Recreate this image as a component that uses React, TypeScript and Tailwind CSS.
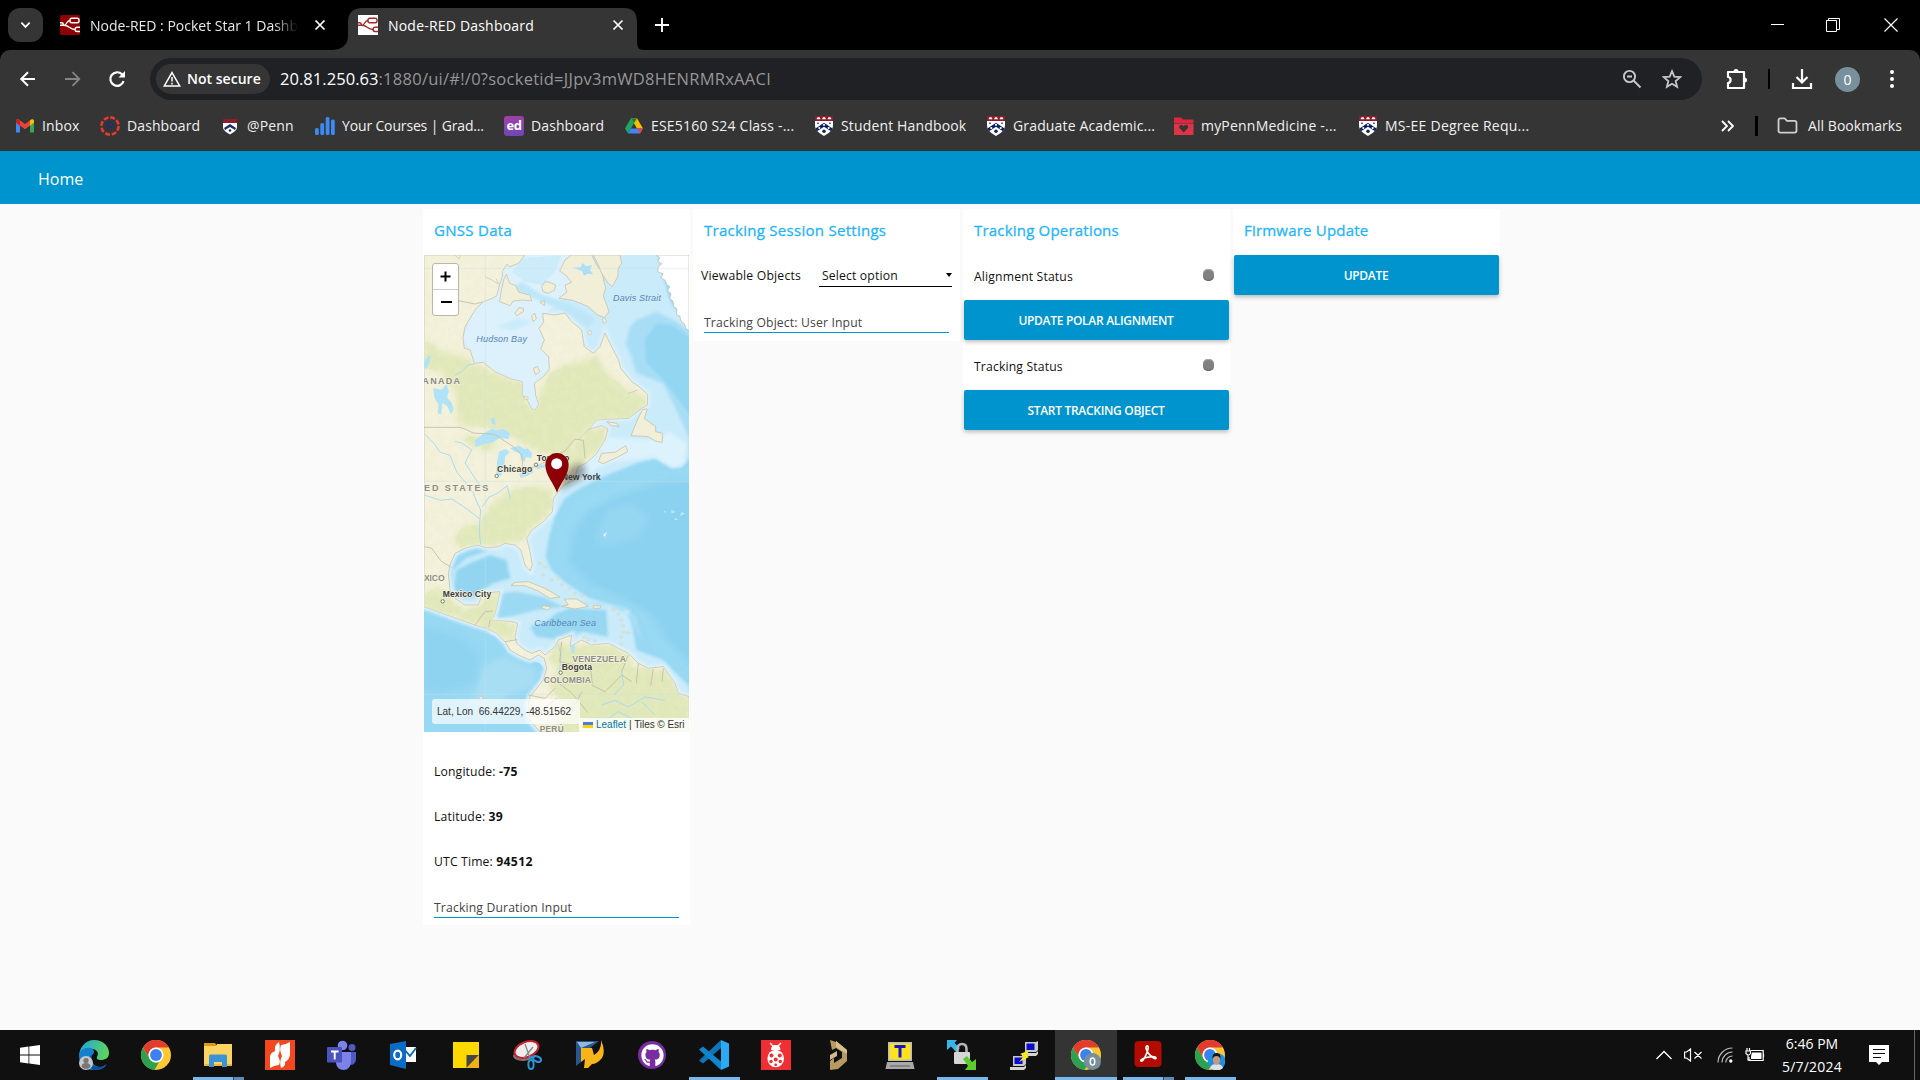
import React from "react";
import { FaGithub } from "react-icons/fa";

type P = { className?: string };

const NodeRed = ({ dark }: { dark: boolean }) => {
  const c = dark ? "#ffffff" : "#a02c2c";
  return (
    <svg viewBox="0 0 20 20" className="h-5 w-5 shrink-0">
      <rect width="20" height="20" rx={dark ? 1.5 : 0} fill={dark ? "#8f0000" : "#ffffff"} />
      <g fill="none" stroke={c} strokeWidth="1.4">
        <rect x="10" y="3.300" width="9" height="4.400" rx="1.800" />
        <path d="M20 12.300h-3q-1.800 0-1.800 1.800v.6q0 1.800 1.800 1.800h3" />
        <path d="M0 10.200h4c3 0 2.500-4.700 6-4.700M4 10.200c5 0 5.500 4.300 11 4.300M0 7.700h1.500q1.800 0 1.800 1.500v1.500" />
      </g>
    </svg>
  );
};

const Cross = ({ className }: P) => (
  <svg viewBox="0 0 12 12" className={className} stroke="#fff" strokeWidth="1.700" fill="none">
    <path d="M1.500 1.500l9 9M10.500 1.500l-9 9" />
  </svg>
);

const Shield = () => (
  <svg viewBox="0 0 20 20" className="h-5 w-5">
    <path d="M1 0h18v9c0 6-5 8.500-9 11C6 17.500 1 15 1 9z" fill="#fff" />
    <path d="M1 0h18v5H1z" fill="#8c1d2b" />
    <path d="M3.500 1.200h2l1 2h-4zM9 1.200h2l1 2H8zM14.500 1.200h2l1 2h-4z" fill="#fff" />
    <path d="M1.500 12.500L10 6.800l8.500 5.700-1.500 2.800-7-4.500-7 4.500z" fill="#0c2060" />
    <g fill="#fff">
      <circle cx="10" cy="8.800" r="1.100" />
      <circle cx="5.300" cy="12" r="1.100" />
      <circle cx="14.700" cy="12" r="1.100" />
    </g>
    <circle cx="10" cy="15.300" r="1.700" fill="#0c2060" />
    <path d="M3 7.200h2M15 7.200h2" stroke="#0c2060" />
  </svg>
);

const Gmail = () => (
  <svg viewBox="0 0 20 20" className="h-5 w-5">
    <path d="M1 5v11.500h4V9z" fill="#4285f4" />
    <path d="M15 9v7.500h4V5z" fill="#34a853" />
    <path d="M1 4.800C1 3 3 2.800 4.200 3.700L10 8l5.800-4.300V9L10 13.200 4.200 9 1 6.800z" fill="#ea4335" />
    <path d="M15 4.300C17 2.700 19 3.300 19 5v1.800L15 9.700z" fill="#fbbc04" />
    <path d="M1 6.800V5c0-1.500 1.800-2.200 4-.7v5.400z" fill="#c5221f" />
  </svg>
);

const Canvas = () => (
  <svg viewBox="0 0 20 20" className="h-5 w-5">
    <circle cx="10" cy="10" r="8.600" fill="none" stroke="#e63b2e" strokeWidth="2.600" strokeDasharray="4.900 1.850" />
    <path d="M8 14V6.500h3a2.200 2.200 0 010 4.500H8" fill="none" stroke="#26305f" strokeWidth="1.800" />
  </svg>
);

const PennSmall = () => (
  <svg viewBox="0 0 20 20" className="h-5 w-5">
    <path d="M3 3h14v4H3z" fill="#8c1d2b" />
    <path d="M3 7h14v4c0 4-4 5.500-7 7.500C7 16.500 3 15 3 11z" fill="#fff" />
    <path d="M4 12l6-4 6 4-1 2-5-3-5 3z" fill="#1b2b6b" />
    <circle cx="10" cy="14.500" r="1.300" fill="#1b2b6b" />
  </svg>
);

const Bars = () => (
  <svg viewBox="0 0 20 20" className="h-5 w-5" fill="#3d8bf2">
    <rect x="0" y="12" width="3.800" height="7" rx="1.500" />
    <rect x="5.300" y="7" width="3.800" height="12" rx="1.500" />
    <rect x="10.700" y="1" width="3.800" height="18" rx="1.500" />
    <rect x="16" y="3.500" width="3.800" height="15.500" rx="1.500" />
  </svg>
);

const Ed = () => (
  <div className="flex h-5 w-5 items-center justify-center rounded-[3px] bg-linear-to-b from-[#a03fa8] to-[#6f45b5] text-[13px] leading-none font-bold tracking-[-0.5px] text-white">
    ed
  </div>
);

const Drive = () => (
  <svg viewBox="0 0 20 20" className="h-5 w-5">
    <path d="M7 2.200L1 12.500 4 17.600 10 7.300z" fill="#1fa463" />
    <path d="M7 2.200h6l6 10.300h-6z" fill="#fbbc04" />
    <path d="M4 17.600l3-5.100h12l-3 5.100z" fill="#4285f4" />
    <path d="M13 12.500h6l-3 5.100z" fill="#ea4335" />
    <path d="M7 2.200h6l-3 5.100z" fill="#188038" />
  </svg>
);

const RedFolder = () => (
  <svg viewBox="0 0 20 20" className="h-5 w-5">
    <path d="M0 1.500h7l2 2h10.500V7H0z" fill="#e0263f" />
    <path d="M0 7.500h19.500V19H0z" fill="#dc3547" />
    <path d="M9.700 16.500L5.500 12c-1.500-3 2.700-4.200 4.200-1.600 1.500-2.600 5.700-1.400 4.200 1.600z" fill="#353535" />
  </svg>
);

const bookmarks: { icon: React.ReactNode; label: string; w: string; t: string }[] = [
  { icon: <Gmail />, label: "Inbox", w: "w-[85px]", t: "tracking-[0.150px]" },
  { icon: <Canvas />, label: "Dashboard", w: "w-[120px]", t: "tracking-[0.100px]" },
  { icon: <PennSmall />, label: "@Penn", w: "w-[95px]", t: "tracking-[0.150px]" },
  { icon: <Bars />, label: "Your Courses | Grad...", w: "w-[189px]", t: "tracking-[-0.150px]" },
  { icon: <Ed />, label: "Dashboard", w: "w-[120px]", t: "tracking-[0.100px]" },
  { icon: <Drive />, label: "ESE5160 S24 Class -...", w: "w-[190px]", t: "tracking-[0.200px]" },
  { icon: <Shield />, label: "Student Handbook", w: "w-[172px]", t: "tracking-[0.150px]" },
  { icon: <Shield />, label: "Graduate Academic...", w: "w-[188px]", t: "tracking-[0.150px]" },
  { icon: <RedFolder />, label: "myPennMedicine -...", w: "w-[184px]", t: "tracking-[0.200px]" },
  { icon: <Shield />, label: "MS-EE Degree Requ...", w: "w-[180px]", t: "tracking-[0.250px]" },
];

const TabStrip = () => (
  <div className="flex h-[50px] items-start bg-black text-[14px] text-[#e8e8e8]">
    <div className="mt-2 ml-2 flex h-[34px] w-[35px] items-center justify-center rounded-[12px] bg-[#353535]">
      <svg viewBox="0 0 12 8" className="h-[8px] w-[11px]" fill="none" stroke="#fff" strokeWidth="2">
        <path d="M1.500 1.500L6 6l4.500-4.500" />
      </svg>
    </div>
    <div className="ml-[17px] flex h-[50px] w-[272px] items-center">
      <NodeRed dark />
      <div className="ml-[10px] w-[208px] overflow-hidden whitespace-nowrap [mask-image:linear-gradient(to_right,black_88%,transparent)]">
        Node-RED : Pocket Star 1 Dashb
      </div>
      <Cross className="ml-4 h-3 w-3" />
    </div>
    <svg viewBox="0 0 312 42" className="mt-2 -mr-[312px] h-[42px] w-[312px]">
      <path d="M0 42c8 0 16-4 16-14V14C16 5 21 0 30 0h262c9 0 13 5 13 14v14c0 10 0 14 7 14z" fill="#353535" />
    </svg>
    <div className="relative flex h-[50px] w-[312px] items-center pl-[26px] text-white">
      <NodeRed dark={false} />
      <span className="ml-[10px] w-[224px] whitespace-nowrap tracking-[0.200px]">Node-RED Dashboard</span>
      <Cross className="h-3 w-3 shrink-0" />
    </div>
    <svg viewBox="0 0 14 14" className="mt-[18px] ml-[11px] h-[14px] w-[14px]" stroke="#fff" strokeWidth="1.900">
      <path d="M7 0v14M0 7h14" />
    </svg>
    <div className="mt-[18px] ml-auto flex items-center pr-[22px]">
      <svg viewBox="0 0 14 14" className="h-[14px] w-[14px]" stroke="#fff">
        <path d="M1 6.500h13" />
      </svg>
      <svg viewBox="0 0 14 14" className="ml-[42px] h-[14px] w-[14px]" stroke="#fff" fill="none">
        <path d="M.5 2.500h10v11H.5zM2.500 2.500V.5h11v11h-3" />
      </svg>
      <svg viewBox="0 0 14 14" className="ml-[44px] h-[14px] w-[14px]" stroke="#fff" strokeWidth="1.200">
        <path d="M.5.5l13 13M13.500.5l-13 13" />
      </svg>
    </div>
  </div>
);

const Toolbar = () => (
  <div className="flex h-[58px] items-center rounded-t-[10px] bg-[#353535] pl-[19px]">
    <svg viewBox="0 0 18 18" className="h-[18px] w-[18px]" fill="none" stroke="#fff" strokeWidth="2">
      <path d="M16 9H2.500M9 2.200L2.200 9 9 15.800" />
    </svg>
    <svg viewBox="0 0 18 18" className="ml-[27px] h-[18px] w-[18px]" fill="none" stroke="#858585" strokeWidth="1.800">
      <path d="M1 9h14M8.500 2.200L15.300 9l-6.800 6.800" />
    </svg>
    <svg viewBox="0 0 18 18" className="ml-[26px] h-[18px] w-[18px]" fill="none" stroke="#fff" strokeWidth="2.200">
      <path d="M15.600 11.200A6.800 6.800 0 1114 4.300l1.500 1.500" />
      <path d="M17 1v6.500h-6.500z" fill="#fff" stroke="none" />
    </svg>
    <div className="ml-6 flex h-[42px] w-[1552px] items-center rounded-full bg-[#202124] pl-[6px]">
      <div className="flex h-[30px] w-[114px] items-center rounded-full bg-[#353535] pl-[7px]">
        <svg viewBox="0 0 18 16" className="h-[16px] w-[18px]" fill="none" stroke="#fff" strokeWidth="1.500">
          <path d="M9 1.600L16.700 15H1.300z" />
          <path d="M9 6v4.500M9 11.800v1.700" />
        </svg>
        <span className="mb-px ml-[6px] whitespace-nowrap text-[14px] font-semibold tracking-[0.020px] text-white">Not secure</span>
      </div>
      <div className="ml-[10px] whitespace-nowrap text-[16.500px] tracking-[0.260px] text-[#969696]">
        <span className="tracking-[0.050px] text-white">20.81.250.63</span>:1880/ui/#!/0?socketid=JJpv3mWD8HENRMRxAACI
      </div>
      <svg viewBox="0 0 20 20" className="ml-auto h-5 w-5" fill="none" stroke="#c7c7c7" strokeWidth="1.900">
        <circle cx="7.500" cy="7.500" r="5.600" />
        <path d="M11.500 11.500L18.500 18.500M5 7.500h5" />
      </svg>
      <svg viewBox="0 0 20 20" className="mr-5 ml-5 h-5 w-5" fill="none" stroke="#c7c7c7" strokeWidth="1.800">
        <path d="M10 2.200l2.300 5.400 6 .5-4.600 3.900 1.400 5.800-5.100-3.100-5.100 3.100L6.300 12 1.700 8.100l6-.5z" />
      </svg>
    </div>
    <svg viewBox="0 0 22 22" className="ml-6 h-[22px] w-[22px]" fill="none" stroke="#fff" strokeWidth="2.200" strokeLinejoin="round">
      <path d="M2 4h16v16H2v-5c3.500-.5 3.500-5.500 0-6z" />
      <path d="M7.500 3.500a2.500 2.500 0 015 0zM18.500 9.500a2.500 2.500 0 010 5z" fill="#fff" stroke="none" />
    </svg>
    <div className="ml-[20px] h-5 w-[2px] bg-black" />
    <svg viewBox="0 0 22 22" className="ml-[21px] h-[22px] w-[22px]" fill="none" stroke="#fff" strokeWidth="2.200">
      <path d="M11 1v13M5.500 9l5.500 5.500L16.500 9M2 15v5h18v-5" />
    </svg>
    <div className="ml-[22px] flex h-[25px] w-[25px] items-center justify-center rounded-full bg-[#78909c] text-[14px] text-white">0</div>
    <svg viewBox="0 0 4 20" className="ml-[30px] h-5 w-1" fill="#fff">
      <circle cx="2" cy="3" r="2" />
      <circle cx="2" cy="10" r="2" />
      <circle cx="2" cy="17" r="2" />
    </svg>
  </div>
);

const Bookmarks = () => (
  <div className="flex h-[43px] items-start bg-[#353535] pl-[15px] text-[14px] text-[#f0f0f0]">
    {bookmarks.map((b, i) => (
      <div key={i} className={`flex h-[35px] shrink-0 items-center ${b.w}`}>
        {b.icon}
        <span className={`mb-px ml-[7px] whitespace-nowrap ${b.t}`}>{b.label}</span>
      </div>
    ))}
    <div className="ml-auto flex h-[35px] items-center pr-[18px]">
      <svg viewBox="0 0 13 12" className="h-3 w-[13px]" fill="none" stroke="#fff" strokeWidth="1.800">
        <path d="M1 1l5 5-5 5M7 1l5 5-5 5" />
      </svg>
      <div className="ml-[21px] h-5 w-[3px] bg-black" />
      <svg viewBox="0 0 22 18" className="ml-[19px] h-[17px] w-[21px]" fill="none" stroke="#d0d0d0" strokeWidth="1.900">
        <path d="M1.500 3.500q0-2 2-2H8l2.500 2.500h8q2 0 2 2v8.500q0 2-2 2h-15q-2 0-2-2z" />
      </svg>
      <span className="mb-px ml-[10px] whitespace-nowrap tracking-[0.050px]">All Bookmarks</span>
    </div>
  </div>
);

const LAND =
  "M27 150H330L310 175 285 185 275 178 262 200 262 215 255 235 245 272 232 280 205 290 182 312 165 340 150 365 144 400 148 430 165 434 178 475 205 472 240 500 285 521 322 530 322 570 340 590 347 608 360 616 371 598 362 570 358 535 385 515 403 492 401 455 377 432 388 405 372 370 386 352 383 325 420 330 450 324 470 350 500 375 508 425 535 445 555 425 570 384 590 425 612 468 617 490 650 530 672 545 698 568 697 600 680 610 640 640 590 642 545 645 510 685 487 705 525 672 560 662 579 672 570 705 560 720 545 745 530 760 512 775 490 785 482 808 492 818 450 838 428 862 415 882 412 920 385 950 350 975 335 1000 345 1040 352 1080 345 1098 330 1080 318 1035 300 1020 270 1015 250 1025 215 1028 185 1020 150 1030 120 1045 105 1080 100 1105 105 1155 120 1180 150 1200 190 1200 202 1165 255 1160 245 1205 237 1235 225 1245 290 1250 308 1255 300 1295 305 1315 330 1335 350 1345 375 1335 390 1350 420 1325 430 1305 470 1290 465 1325 500 1305 530 1320 580 1315 610 1330 640 1345 670 1375 700 1390 745 1385 780 1435 790 1465 822 1475V1581H375L345 1545 340 1500 345 1475 365 1450 385 1425 395 1390 388 1360 370 1350 345 1365 310 1350 285 1335 270 1310 245 1285 215 1270 180 1260 110 1235 27 1205Z";

const ISLANDS = [
  "M266 225L274 208 284 235 302 242 312 262 345 270 350 288 325 285 295 288 285 302 254 290 258 262Z",
  "M380 245L390 230 405 232 422 240 418 256 400 265 384 260Z",
  "M434 198L450 165 470 150 530 150 545 180 560 200 572 250 565 272 582 320 568 338 545 328 520 305 500 296 470 285 432 280 455 262 450 240 470 232 452 210Z",
  "M535 150L615 150 620 175 610 190 608 215 592 245 580 235 560 205 550 180Z",
  "M300 325L312 308 325 310 325 320 305 332Z",
  "M350 332L360 325 364 342 354 350Z",
  "M375 292L388 287 388 302Z",
  "M355 490L368 484 374 500 362 510Z",
  "M648 692L665 650 682 614 697 612 688 640 708 655 722 665 722 680 742 685 742 712 720 708 700 695Z",
  "M550 770L560 745 600 742 632 722 638 740 610 755 565 776Z",
  "M288 1142L300 1132 340 1130 390 1150 435 1176 405 1180 370 1158 330 1142Z",
  "M448 1182L485 1182 520 1204 480 1212 440 1204 460 1200Z",
  "M385 1202L408 1206 398 1214 380 1210Z",
  "M535 1202L558 1203 555 1210 535 1210Z",
  "M575 650L605 655 612 664 590 662Z",
];

const GREEN = [
  "M27 400L80 440 150 455 180 478 230 500 285 522 320 532 330 590 365 612 375 560 400 510 450 480 500 470 540 450 580 510 640 560 690 570 690 605 640 640 560 645 510 680 480 705 460 760 380 745 300 700 240 670 130 660 120 560 80 500 27 490Z",
  "M150 960L190 960 230 900 260 870 330 845 410 850 415 900 400 930 340 975 330 1005 300 1010 240 1020 190 1015 130 1030 120 1000Z",
  "M400 1440L440 1380 520 1370 620 1390 690 1390 760 1400 800 1475 822 1480V1581H420L450 1500Z",
  "M27 1170L60 1150 95 1160 110 1190 150 1215 195 1205 215 1170 255 1165 245 1240 300 1260 290 1310 180 1255 90 1225 27 1205Z",
  "M400 1360L430 1310 460 1320 600 1325 650 1360 640 1400 500 1390 440 1400Z",
  "M490 700L530 672 572 670 570 710 520 760 490 780 440 830 420 840 430 790 470 740Z",
  "M140 690L200 700 250 720 230 740 160 720Z",
];

const MapLabel = ({ x, y, w, size, fill, bold, italic, halo, children }: { x: number; y: number; w: number; size: number; fill: string; bold?: boolean; italic?: boolean; halo?: boolean; children: string }) => (
  <text
    x={x}
    y={y}
    textLength={w}
    fontSize={size}
    fill={fill}
    fontFamily="Liberation Sans, sans-serif"
    fontWeight={bold ? 700 : 400}
    fontStyle={italic ? "italic" : "normal"}
    stroke={halo ? "#f4f2de" : "none"}
    strokeWidth={halo ? 4 : 0}
    paintOrder="stroke"
  >
    {children}
  </text>
);

const WorldMap = () => (
  <svg viewBox="27 150 795 1431" className="block h-[477px] w-[265px]">
    <defs>
      <filter id="soft" x="-20%" y="-20%" width="140%" height="140%">
        <feGaussianBlur stdDeviation="10" />
      </filter>
      <filter id="edge" x="-20%" y="-20%" width="140%" height="140%">
        <feGaussianBlur stdDeviation="4" />
      </filter>
      <filter id="grain" x="0" y="0" width="100%" height="100%">
        <feTurbulence type="fractalNoise" baseFrequency="0.045" numOctaves="4" seed="7" result="n" />
        <feColorMatrix in="n" type="matrix" values="0 0 0 0 0.74 0 0 0 0 0.8 0 0 0 0 0.5 0 0 0 6 -2.6" result="g" />
        <feComposite in="g" in2="SourceAlpha" operator="in" />
      </filter>
      <clipPath id="land">
        <path d={LAND} />
      </clipPath>
    </defs>
    <rect x="27" y="150" width="795" height="1431" fill="#97d8f3" />
    <g transform="translate(24 135)">
      <path d="M200 0H700L740 150 800 240V620L775 655 740 650 700 625 640 640 540 680 470 715 425 745 395 800 378 860 368 920 385 960 430 1000 500 1045 620 1080 640 1200 720 1230 800 1310V1400H200Z" fill="#caebfa" filter="url(#edge)" />
      <path d="M690 570L740 545 790 580 785 640 750 655 690 620 560 640 470 680 450 660 540 560Z" fill="#dcf2fc" filter="url(#edge)" />
      <path d="M620 230L640 210 700 185 760 215 810 250V590L760 480 720 400 640 370 625 320 608 280Z" fill="#a8def5" filter="url(#edge)" />
      <path d="M665 270L700 220 750 225 810 270V510L760 440 720 390 670 340Z" fill="#93d6f2" filter="url(#edge)" />
      <path d="M820 650L720 670 600 695 480 735 425 800 390 870 385 930 430 980 500 1020 570 1045 640 1080 680 1180 820 1290Z" fill="#98d9f3" filter="url(#edge)" />
      <path d="M820 690L700 700 580 740 490 790 450 850 440 940 500 1000 590 1040 680 1090 740 1180 820 1260Z" fill="#8bd2f0" filter="url(#soft)" />
      <path d="M520 850L550 780 620 760 680 800 650 860 570 885 520 880Z" fill="#9dd9f3" filter="url(#soft)" opacity=".6" />
      <path d="M90 960L130 925 200 900 270 905 300 960 320 980 230 1030 140 1075 85 1040Z" fill="#c9ebfa" filter="url(#edge)" />
      <path d="M100 960L140 940 200 915 250 930 262 985 210 1000 150 1040 108 1045 92 1010Z" fill="#93d5f1" filter="url(#edge)" />
      <path d="M235 1030L280 1025 360 1040 420 1070 340 1080 260 1100 215 1110Z" fill="#9cd9f3" filter="url(#edge)" />
      <path d="M400 1090L440 1075 550 1080 555 1160 480 1145 420 1170 340 1160 320 1130 370 1115Z" fill="#97d7f2" filter="url(#edge)" />
      <path d="M420 1055L540 1060 640 1100 660 1180 600 1070Z" fill="#a8def5" filter="url(#edge)" />
      <path d="M0 1080L150 1130 220 1160 290 1220 350 1240 370 1260 320 1350V1446H0Z" fill="#97d8f3" />
      <path d="M180 1250L240 1220 290 1240 340 1260 330 1310 250 1340 190 1400 140 1370Z" fill="#b4e2f6" filter="url(#soft)" opacity=".6" />
      <path d="M0 1130L110 1160 170 1220 160 1300 60 1330 0 1320Z" fill="#8bd2f0" filter="url(#soft)" opacity=".7" />
    </g>
    <path d={LAND} fill="none" stroke="#dcf1fc" strokeWidth="18" filter="url(#edge)" />
    <path d="M180 300L250 230 262 150H460L480 200 455 270 400 320 405 500 370 610 320 580 180 475 145 400Z" fill="#dcf1fc" />
    <path d="M325 160L440 150 420 200 380 240 330 230 290 200Z" fill="#cdecfa" />
    <path d="M290 250L380 290 450 320 520 370 540 340 450 290 380 270 320 230Z" fill="#bde6f8" filter="url(#edge)" />
    <path d="M245 365L310 340 350 350 300 375Z" fill="#c9ebfa" filter="url(#edge)" />
    <path d={LAND} fill="#f4f1dc" stroke="#c8c3ae" strokeWidth="2.500" strokeLinejoin="round" />
    <g clipPath="url(#land)">
      {GREEN.map((d, i) => (
        <path key={i} d={d} fill="#e2e9ba" filter="url(#soft)" />
      ))}
      {GREEN.map((d, i) => (
        <path key={i} d={d} fill="#fff" filter="url(#grain)" opacity=".6" />
      ))}
      <path d={LAND} fill="#fff" filter="url(#grain)" opacity=".1" />
    </g>
    {ISLANDS.map((d, i) => (
      <path key={i} d={d} fill="#f2efd9" stroke="#c8c3ae" strokeWidth="2.500" strokeLinejoin="round" />
    ))}
    <path
      d="M724 150L734 158 728 170 740 176 730 186 728 200 744 206 738 218 750 226 756 240 764 244 758 258 768 266 764 280 774 288 776 304 786 312 784 328 795 334 798 348 808 356 812 368 822 378V150Z"
      fill="#fff"
      stroke="#b9b6a8"
      strokeWidth="2"
    />
    <path d="M475 188l22-2 6-12 10 10 18-4-6 16 10 12-18-2-10 6-6-14z" fill="#a9dff7" />
    <g fill="#b0e3f8">
      <path d="M55 550l25 4 14-16 8 20-6 18 14 18 6 20-8 14-12-26-14-8-4 36-10-6 2-26-12-20zM27 470l14-20 6 8-12 34-8-4z" />
      <path d="M180 706l25-20 28-16 10 6 24-4 18 12-4 18-26-4-20 14-28 6-26 8z" />
      <path d="M246 770l6-30 20-8 12 8-14 16-2 30-10 26-14-2zM285 730l26-8 18 10 10-2 12 14-2 16-16-4-4 14-10-6-4-18-18-8zM312 808l30-12 16 4-20 12-20 6zM362 785l30-8 4 8-28 8zM228 640l10-2 4 22-12-4z" />
      <path d="M468 1325q8-10 12 0l-2 16q-6 8-10 0z" />
    </g>
    <g fill="none" stroke="#a8dcf4" strokeWidth="3">
      <path d="M27 685l30 30 18 26 30 10 20 50 32 38 18 26 10 24 12 26-2 24 -2 40 4 40" />
      <path d="M27 870l50 16 34-4 30 20 42 30 10 10" />
      <path d="M286 880l-10-38 -30 24-24 10-20 30" />
      <path d="M120 510l20-10 20-20 22-4M120 710l20 4 30 20-20 40 40 60 20 20M430 1320l8 30-4 50M560 1500l40-14 40 20 50-30 60 10M520 1540l60 0 30-20 60 30M620 1400l6 40-30 30M680 1490l40 40" />
    </g>
    <g fill="none" stroke="#c2bca6" strokeWidth="2.500">
      <path d="M27 667H136L150 672 175 684 238 688 295 725 320 750 324 790 365 785 420 752 450 738 480 702 505 706 510 760" />
      <path d="M27 1025l22 4 30 40 30 18M180 1260l30-40 24-2M225 1245l-4 22M270 1310l36-6M395 1425l34 8 40 30 50 60M440 1310l-6 60 60 14 34 14 4 40M620 1400l20-50M530 1440l40 20 50-50 30 20M670 1375l-6 60M715 1392l-8 50M745 1390l-4 40M340 1470l50 10 30-30M480 1500l20-40" />
      <path d="M345 1530l30-10 50-40M120 285l60 12 22-6" />
    </g>
    <g stroke="#c9dfe4" strokeWidth="2" opacity=".6">
      <path d="M211 150V1581M27 190H822M27 829H822M27 1468H822" />
    </g>
    <g fill="#e9ead0" stroke="#b9c3b0" strokeWidth="1">
      {[[375, 1075], [390, 1085], [385, 1110], [410, 1125], [430, 1120], [440, 1140], [465, 1150], [480, 1165], [500, 1172], [595, 1215], [610, 1228], [618, 1245], [624, 1262], [626, 1280], [618, 1296], [640, 1284], [620, 1318], [508, 1298], [520, 1304], [540, 1308]].map(([x, y]) => (
        <ellipse key={`${x}-${y}`} cx={x} cy={y} rx="5" ry="3" />
      ))}
    </g>
    <g fill="#f4f1dc" stroke="#c8c3ae" strokeWidth="2">
      <path d="M518 380l8-4 4 10-8 4zM562 342l8-3 4 12-8 4zM120 150h16l-4 12zM190 1480l10-8 4 12zM325 574l14 2 0 8-10-2zM210 215l25 12 15 10-6-16M640 565l28-10" />
    </g>
    <path d="M564 990l12-10-6 16z" fill="#e4f5fc" />
    <g fill="#b9e5f7">
      <path d="M745 920l6-4 2 8zM768 914l14 6-12 6zM800 920l10 6-16 8zM780 938l10 6-12 2z" />
    </g>

    <MapLabel x={594} y={287} w={144} size={27} fill="#5b83b3" italic>Davis Strait</MapLabel>
    <MapLabel x={184} y={410} w={152} size={27} fill="#5b83b3" italic>Hudson Bay</MapLabel>
    <MapLabel x={22} y={536} w={113} size={27} fill="#8b8a85" bold halo>ANADA</MapLabel>
    <MapLabel x={365} y={768} w={98} size={25} fill="#3c3c3c" bold halo>Toronto</MapLabel>
    <MapLabel x={246} y={801} w={106} size={26} fill="#3c3c3c" bold halo>Chicago</MapLabel>
    <MapLabel x={27} y={859} w={193} size={27} fill="#8f8e88" bold halo>ED  STATES</MapLabel>
    <MapLabel x={27} y={1128} w={62} size={26} fill="#8f8e88" bold halo>XICO</MapLabel>
    <MapLabel x={83} y={1177} w={146} size={26} fill="#3c3c3c" bold halo>Mexico City</MapLabel>
    <MapLabel x={358} y={1264} w={185} size={27} fill="#5b83b3" italic>Caribbean Sea</MapLabel>
    <MapLabel x={472} y={1371} w={161} size={26} fill="#8f8e88" bold halo>VENEZUELA</MapLabel>
    <MapLabel x={440} y={1394} w={91} size={26} fill="#3c3c3c" bold halo>Bogota</MapLabel>
    <MapLabel x={386} y={1433} w={142} size={26} fill="#8f8e88" bold halo>COLOMBIA</MapLabel>
    <MapLabel x={374} y={1580} w={72} size={25} fill="#8f8e88" bold halo>PERÚ</MapLabel>
    <path d="M430 858l22-50q24-40 52-30 18 20-10 46z" fill="#000" opacity=".36" filter="url(#soft)" />
    <MapLabel x={440} y={824} w={117} size={26} fill="#3c3c3c" bold>New York</MapLabel>
    <g fill="#fff" stroke="#444" strokeWidth="2">
      <circle cx="363" cy="779" r="5" />
      <circle cx="245" cy="813" r="5" />
      <circle cx="83" cy="1189" r="5" />
      <circle cx="437" cy="1403" r="5" />
    </g>
    <path d="M426 863C418 836 391 812 391 779a35 35 0 0170 0c0 33-27 57-35 84z" fill="#8d0006" />
    <circle cx="425" cy="776" r="16.500" fill="#fff" />
  </svg>
);

const MapWidget = () => (
  <div className="relative mx-px h-[477px] w-[265px] overflow-hidden font-['Liberation_Sans',sans-serif] text-[10px] text-[#333]">
    <WorldMap />
    <div className="absolute top-[8px] left-[8px] w-[27px] overflow-hidden rounded-[3px] border border-[#b9b7aa] bg-white">
      <div className="flex h-[26px] items-center justify-center border-b border-[#ccc]">
        <svg viewBox="0 0 11 11" className="h-[11px] w-[11px]" stroke="#000" strokeWidth="2">
          <path d="M5.500 .5v10M.5 5.500h10" />
        </svg>
      </div>
      <div className="flex h-[25px] items-center justify-center">
        <svg viewBox="0 0 11 11" className="ml-px h-[11px] w-[11px]" stroke="#000" strokeWidth="2">
          <path d="M0 5h11" />
        </svg>
      </div>
    </div>
    <div className="absolute bottom-[8px] left-[8px] flex h-[25px] w-[148px] items-center rounded-[3px] bg-white/70 pl-[5px] whitespace-pre">
      Lat, Lon  66.44229, -48.51562
    </div>
    <div className="absolute right-0 bottom-0 flex h-[14px] w-[110px] items-center bg-white/80 pb-px pl-1 whitespace-nowrap">
      <span className="mr-[3px] inline-block h-[6px] w-[10px] border-b-[3px] border-[#ffd500] bg-[#4c7be1]" />
      <span className="text-[#0078a8]">Leaflet</span>
      <span className="ml-[3px] tracking-[-0.050px]">| Tiles © Esri</span>
    </div>
  </div>
);

const Card = ({ title, children, h, t }: { title: string; children: React.ReactNode; h: string; t: string }) => (
  <section className={`w-[267px] bg-white ${h}`}>
    <h2 className={`flex h-[46px] items-center pb-[3px] pl-[11px] text-[15px] font-medium whitespace-nowrap text-[#1fb5fb] [-webkit-text-stroke:0.300px_#1fb5fb] ${t}`}>{title}</h2>
    {children}
  </section>
);

const Button = ({ children }: { children: string }) => (
  <button className="mx-px mb-[5px] flex h-10 w-[265px] items-center justify-center rounded-[2px] bg-[#0094ce] pt-px pr-px text-[12px] font-semibold tracking-[-0.300px] whitespace-nowrap text-white shadow-[0_2px_4px_rgba(0,0,0,0.26)]">
    {children}
  </button>
);

const Reading = ({ label, value }: { label: string; value: string }) => (
  <div className="flex h-[45px] items-center pt-[2px] pl-[11px] tracking-[0.150px] whitespace-pre">
    {label}: <b className="font-bold tracking-[0.350px]">{value}</b>
  </div>
);

const Status = ({ label }: { label: string }) => (
  <div className="flex h-[45px] items-center justify-between pr-[16px] pl-[11px]">
    <span className="tracking-[0.150px]">{label}</span>
    <span className="mb-[5px] h-3 w-[11px] rounded-[5px] bg-[#808080] shadow-[inset_0_1px_1px_#aaa,inset_0_-1px_1px_#666]" />
  </div>
);

const Dashboard = () => (
  <main className="h-[826px] bg-[#fafafa] pt-[5px] pl-[423px] text-[12.200px] text-[#111]">
    <div className="flex items-start gap-[3px]">
      <Card title="GNSS Data" h="h-[716px]" t="tracking-[0.300px]">
        <MapWidget />
        <div className="h-[17px]" />
        <Reading label="Longitude" value="-75" />
        <Reading label="Latitude" value="39" />
        <Reading label="UTC Time" value="94512" />
        <div className="mt-[12px] ml-[11px] h-[22px] w-[245px] border-b border-[#0094ce] pt-px leading-[21px] tracking-[0.150px] text-[#444]">Tracking Duration Input</div>
      </Card>
      <Card title="Tracking Session Settings" h="h-[132px]" t="tracking-[0.280px]">
        <div className="flex h-[45px] items-start pl-2">
          <span className="mt-[10px] w-[118px] leading-[21px] tracking-[0.200px]">Viewable Objects</span>
          <div className="mt-[10px] flex h-[22px] w-[133px] items-center justify-between border-b border-black pl-[3px]">
            <span className="pt-px tracking-[0.150px]">Select option</span>
            <span className="mb-px h-0 w-0 border-x-[3.500px] border-t-[4px] border-x-transparent border-t-black" />
          </div>
        </div>
        <div className="mt-[12px] ml-[11px] h-[21px] w-[245px] border-b border-[#0094ce] pt-px leading-[20px] tracking-[0.150px] text-[#444]">Tracking Object: User Input</div>
      </Card>
      <Card title="Tracking Operations" h="h-[221px]" t="tracking-[0.200px]">
        <Status label="Alignment Status" />
        <Button>UPDATE POLAR ALIGNMENT</Button>
        <Status label="Tracking Status" />
        <Button>START TRACKING OBJECT</Button>
      </Card>
      <Card title="Firmware Update" h="h-[86px]" t="tracking-[0.200px]">
        <Button>UPDATE</Button>
      </Card>
    </div>
  </main>
);

const I = ({ children }: { children: React.ReactNode }) => (
  <svg viewBox="0 0 30 30" className="h-[30px] w-[30px]">{children}</svg>
);

const ChromeArt = () => (
  <>
    <circle cx="15" cy="15" r="15" fill="#fcc934" />
    <path d="M2 7.500A15 15 0 0128 7.500H15a7.500 7.500 0 00-6.500 11.300z" fill="#e33b2e" />
    <path d="M2 7.500L8.600 18.800A7.500 7.500 0 0018 22l-4.500 8A15 15 0 012 7.500z" fill="#2da14f" />
    <circle cx="15" cy="15" r="7.500" fill="#fff" />
    <circle cx="15" cy="15" r="5.900" fill="#3b82f0" />
  </>
);

const Computer = ({ x, y }: { x: number; y: number }) => (
  <g transform={`translate(${x} ${y})`}>
    <path d="M3 0h11l2-1v9l-2 2H3z" fill="#c9c9c9" />
    <rect x="4.500" y="1.500" width="8" height="6.500" fill="#0a0ad0" />
    <path d="M0 11h14l2-2v3l-2 2H0z" fill="#d5d5d5" />
  </g>
);

type TaskItem = { art: React.ReactNode; run?: "one" | "many"; active?: boolean };
const tasks: TaskItem[] = [
  {
    art: (
      <I>
        <defs>
          <linearGradient id="eg" x1="0" x2="1" y1="0.300" y2="0.500"><stop offset="0" stopColor="#22a5d9" /><stop offset="1" stopColor="#5ed65a" /></linearGradient>
        </defs>
        <path d="M0 17C0 8 6 0 15 0c10 0 15 7 15 13 0 5-4 7-8 7-3 0-5-1-4-3 3-5-2-9-7-8-6 0-11 4-11 8z" fill="url(#eg)" />
        <path d="M0 16c0-5 5-9 11-8 4 1 5 4 3 6-3 3-2 9 3 12 4 2 8 1 11-2-3 5-8 6-13 6C6 30 0 24 0 16z" fill="#1480d0" />
        <path d="M14 14c-4 3-3 10 2 12 4 2 8 1 11-2-3 5-8 6-13 6-6-6-6-12 0-16z" fill="#0c4f96" />
        <circle cx="7" cy="23" r="7" fill="#c8c8c8" />
        <circle cx="7" cy="20.500" r="2.600" fill="#777" />
        <path d="M2.500 27q0-4 4.500-4t4.500 4q-4.500 4-9 0z" fill="#777" />
      </I>
    ),
  },
  { art: <I><ChromeArt /></I> },
  {
    run: "many",
    art: (
      <I>
        <path d="M1 3h11l2 3H1z" fill="#d99b14" />
        <path d="M1 6h12l1-2h15v22H1z" fill="#fcd462" />
        <path d="M1 24h28v2H1z" fill="#eab93c" />
        <path d="M6 27V16q0-1.500 1.500-1.500h15Q24 14.500 24 16v11h-5v-5h-8v5z" fill="#3a93d6" />
      </I>
    ),
  },
  {
    art: (
      <I>
        <rect width="30" height="30" fill="#f2471f" />
        <path d="M5 28V17q0-4 5-6-1-6 4-9 2 8-1 14 3 5 1 9-4 0-9 3zM25 2v12q0 5-5 8 1 4-4 6-2-6 1-12-3-6-1-11 4 0 9-3z" fill="#fff" />
      </I>
    ),
  },
  {
    art: (
      <I>
        <circle cx="25" cy="7.500" r="3.500" fill="#5059c9" />
        <path d="M19 12h10v8q-1 5-6 5h-4z" fill="#5059c9" />
        <circle cx="15.500" cy="5.500" r="4.800" fill="#7b83eb" />
        <path d="M9 12h15v10q-1 8-7.500 8T9 23z" fill="#7b83eb" />
        <rect x="0" y="7" width="15" height="15.500" rx="1.200" fill="#4b53bc" />
        <path d="M4 11.500h7.500M7.700 11.500v8" stroke="#fff" strokeWidth="1.900" />
      </I>
    ),
  },
  {
    art: (
      <I>
        <path d="M14 7h13v15H14z" fill="#fff" />
        <path d="M15 9l6 7 6-8" stroke="#0a66b7" strokeWidth="1.800" fill="none" />
        <path d="M1 4l16-3v28L1 25z" fill="#0a6cc4" />
        <ellipse cx="8.700" cy="15" rx="3.500" ry="4.300" fill="none" stroke="#fff" strokeWidth="2.200" />
      </I>
    ),
  },
  {
    art: (
      <I>
        <path d="M2 2h26v26H2z" fill="#ffd800" />
        <path d="M15.500 15H28L15.500 28z" fill="#454545" />
        <path d="M28 15v13H15.500z" fill="#eeb310" />
      </I>
    ),
  },
  {
    art: (
      <I>
        <ellipse cx="10" cy="16" rx="10" ry="5" fill="#7a7a7a" />
        <ellipse cx="13.500" cy="9.500" rx="12.500" ry="7.500" fill="#eee" stroke="#c8202c" strokeWidth="2" transform="rotate(-22 13.500 9.500)" />
        <path d="M12 4l5 14M20 7l-9 11" stroke="#888" strokeWidth="1.300" />
        <path d="M16 18l7-2" stroke="#2a94d6" strokeWidth="2" />
        <ellipse cx="24" cy="19" rx="4.200" ry="2.500" fill="none" stroke="#2a94d6" strokeWidth="2" transform="rotate(25 24 19)" />
        <ellipse cx="18" cy="24.500" rx="2.600" ry="4.500" fill="none" stroke="#2a94d6" strokeWidth="2" />
      </I>
    ),
  },
  {
    art: (
      <I>
        <path d="M1 1h23L10 12 6 22 1 26z" fill="#28578f" />
        <path d="M2 2h18L6 8z" fill="#92b9dc" />
        <path d="M6 8h11l2 7q8-5 7-15 5 11 1 18-5 6-10 6l-4 4H9l1-9-4 3z" fill="#f9b41a" />
      </I>
    ),
  },
  {
    art: (
      <div className="flex h-[28px] w-[28px] items-center justify-center rounded-full bg-[#7a2da0]">
        <FaGithub className="h-[23px] w-[23px] text-white" />
      </div>
    ),
  },
  {
    run: "one",
    art: (
      <I>
        <path d="M22 0v8L4 23.500 0 20.500z" fill="#1075b8" />
        <path d="M0 9.500L4 6.500 22 21.500V30z" fill="#0f86cc" />
        <path d="M22 0l8 3.500v23L22 30z" fill="#29aaf2" />
      </I>
    ),
  },
  {
    art: (
      <I>
        <rect width="30" height="30" fill="#f02f35" />
        <path d="M9 3l4 4M20 3l-4 4" stroke="#fff" strokeWidth="1.300" />
        <path d="M10 10q0-5 4.700-5t4.700 5z" fill="#fff" />
        <ellipse cx="14.700" cy="18.500" rx="8.300" ry="8.800" fill="#fff" />
        <g fill="#f02f35">
          <circle cx="10.500" cy="15.500" r="2" /><circle cx="18.800" cy="15.500" r="2" /><circle cx="14.700" cy="19.500" r="2" />
          <circle cx="10" cy="21.500" r="1.700" /><circle cx="19.300" cy="21.500" r="1.700" /><circle cx="14.700" cy="24.800" r="1.400" />
        </g>
      </I>
    ),
  },
  {
    art: (
      <I>
        <path d="M7 0l6 2v6l-4 2zM13 1l11 9v11l-9 8-8 1v-9l4-3v5l8-5v-6l-6-4z" fill="#b59a62" />
        <path d="M7 15l7-4v5l-7 4z" fill="#d1ba86" />
        <path d="M13 1l11 9v4L13 7z" fill="#d6c08c" />
      </I>
    ),
  },
  {
    art: (
      <I>
        <rect x="3" y="2" width="24" height="19" fill="#bdbdbd" />
        <rect x="4.500" y="3.500" width="21" height="16" fill="#ffe21f" />
        <path d="M9.500 6.500h11M15 6.500v11" stroke="#1414c8" strokeWidth="3" />
        <path d="M2 22h26l1.500 7H.5z" fill="#a8a8a8" />
        <path d="M5 26h20" stroke="#777" strokeWidth="1.500" />
      </I>
    ),
  },
  {
    run: "one",
    art: (
      <I>
        <path d="M0 0h10L7.500 3 13 8 9 12 4 6.500 0 10z" fill="#36b6e8" />
        <path d="M10.500 13V9q0-5 4.500-5t4.500 5v4" fill="none" stroke="#b4b4b4" strokeWidth="2.600" />
        <rect x="7" y="12" width="16" height="12" rx="1" fill="#d6d6d6" />
        <path d="M16 19l4-3 5 6 4-3v11H18l3-4z" fill="#5ccb2c" />
      </I>
    ),
  },
  {
    art: (
      <I>
        <Computer x={13} y={2} />
        <Computer x={1} y={16} />
        <path d="M21 10l-10 4 4 2-5 6 10-5-3-2z" fill="#ffee00" />
      </I>
    ),
  },
  {
    run: "one",
    active: true,
    art: (
      <I>
        <ChromeArt />
        <circle cx="21.500" cy="21.500" r="8.500" fill="#78909c" />
        <ellipse cx="21.500" cy="21.500" rx="2.300" ry="3.500" fill="none" stroke="#fff" strokeWidth="1.500" />
      </I>
    ),
  },
  {
    run: "many",
    art: (
      <I>
        <rect x="1.500" y="1" width="27" height="26" rx="4" fill="#b30b00" />
        <path d="M8 21c-2-3 14-6 15-3 0 3-9-4-10-10 0-3 3-3 2 1-1 5-5 13-7 12z" fill="none" stroke="#fff" strokeWidth="1.600" />
      </I>
    ),
  },
  {
    run: "one",
    art: (
      <I>
        <ChromeArt />
        <circle cx="21.500" cy="21.500" r="8.800" fill="#1f8fe0" />
        <path d="M15 28q1-4 6.500-4t6.500 4q-6 5-13 0z" fill="#dfe3e8" />
        <ellipse cx="21.500" cy="20" rx="3.500" ry="5" fill="#c69a7e" />
        <path d="M17.500 19q-.5-6 4-6t4 6q-1-3-4-3t-4 3z" fill="#151515" />
      </I>
    ),
  },
];

const Taskbar = () => (
  <footer className="flex h-[50px] bg-[#101010]">
    <div className="flex w-[60px] items-center justify-center">
      <svg viewBox="0 0 20 20" className="h-5 w-5" fill="#fff">
        <path d="M0 2.800l8.500-1.200v8H0zM9.300 1.500L20 0v9.600H9.300zM0 10.400h8.500v8L0 17.200zM9.300 10.400H20V20L9.300 18.500z" />
      </svg>
    </div>
    <div className="ml-[3px] flex">
      {tasks.map((t, i) => (
        <div key={i} className={`flex h-[50px] w-[62px] flex-col items-center ${t.active ? "bg-[#343434]" : ""}`}>
          <div className="flex h-[47px] items-center pt-[3px]">{t.art}</div>
          {t.run && (
            <div className={`flex h-[3px] ${t.active ? "w-[62px]" : "w-[51px]"}`}>
              <div className="flex-1 bg-[#76b9ed]" />
              {t.run === "many" && <div className="w-[11px] border-l border-[#2c4860] bg-[#5b8db8]" />}
            </div>
          )}
        </div>
      ))}
    </div>
    <div className="ml-auto flex items-center">
      <svg viewBox="0 0 16 10" className="h-[10px] w-4" fill="none" stroke="#fff" strokeWidth="1.300">
        <path d="M.5 9L8 1.500 15.500 9" />
      </svg>
      <svg viewBox="0 0 18 14" className="ml-3 h-[14px] w-[18px]" fill="none" stroke="#fff" strokeWidth="1.200">
        <path d="M.6 4h2L6.500 1v12L2.600 10h-2zM10.500 4l7 6.500M17.500 4l-7 6.500" />
      </svg>
      <svg viewBox="0 0 16 16" className="ml-[15px] h-4 w-4" fill="none" stroke="#fff" strokeWidth="1.200">
        <path d="M1 15.500A14.500 14.500 0 0115.500 1M5 15.500A10.500 10.500 0 0115.500 5M8.800 15.500A6.700 6.700 0 0115.500 9" stroke="#bbb" />
        <circle cx="13.800" cy="14" r="1.700" fill="#fff" stroke="none" />
      </svg>
      <svg viewBox="0 0 20 14" className="ml-[12px] h-[14px] w-5" fill="none" stroke="#fff" strokeWidth="1.200">
        <path d="M5.500 2.500h12.700v10H4V9M18.500 6v3" />
        <path d="M7 4.500h9.500v6.500H6V8z" fill="#fff" stroke="none" />
        <path d="M1 3h4.500v2.500q-2 3-4.500 0zM2 0v3M4.500 0v3M3 7v5h3" />
      </svg>
      <div className="ml-[13px] flex w-[68px] flex-col items-center pb-px text-[14px] leading-[23px] text-white">
        <span className="whitespace-nowrap">6:46 PM</span>
        <span className="whitespace-nowrap tracking-[0.200px]">5/7/2024</span>
      </div>
      <svg viewBox="0 0 20 20" className="ml-[23px] h-5 w-5">
        <path d="M0 0h20v17h-7l-3 3-3-3H0z" fill="#fff" />
        <path d="M4 4.500h12M4 8.500h12M4 12.500h8" stroke="#101010" strokeWidth="1.200" />
      </svg>
      <div className="ml-[25px] h-[50px] w-[6px] border-l border-[#666]" />
    </div>
  </footer>
);

export default function App() {
  return (
    <div className="flex h-[1080px] w-[1920px] flex-col overflow-hidden bg-black font-['Open_Sans',sans-serif]">
      <TabStrip />
      <Toolbar />
      <Bookmarks />
      <header className="flex h-[53px] items-center bg-[#0094ce] pt-[3px] pl-[38px] text-[16px] text-white">Home</header>
      <Dashboard />
      <Taskbar />
    </div>
  );
}
